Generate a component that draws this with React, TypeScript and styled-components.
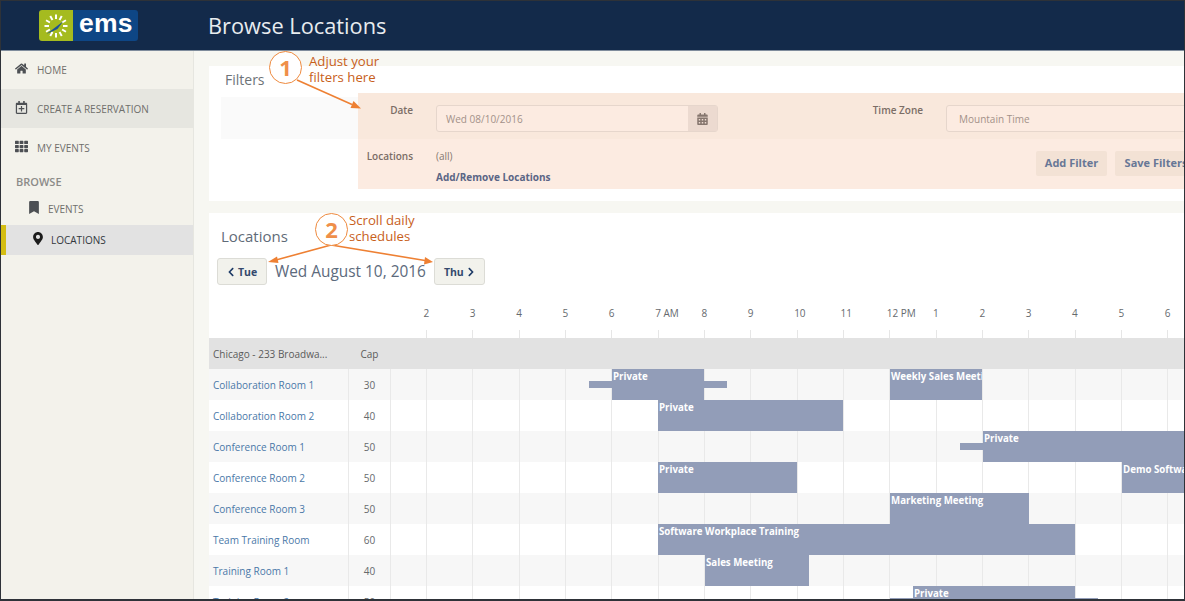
import React from "react";
import styled, { createGlobalStyle } from "styled-components";
import {
  FaHome,
  FaRegCalendarPlus,
  FaTh,
  FaBookmark,
  FaMapMarkerAlt,
  FaCalendarAlt,
  FaChevronLeft,
  FaChevronRight,
} from "react-icons/fa";

// Types
interface Booking {
  start: number;
  end: number;
  title?: string;
  stubStart?: number;
  stubEnd?: number;
}

interface Room {
  name: string;
  cap: number;
  bookings: Booking[];
}

// All booking positions are page x coordinates, the chart starts at x = 391
const CHART_X = 391;
const HOUR_WIDTH = 46.33;

const hours = ["2", "3", "4", "5", "6", "7 AM", "8", "9", "10", "11", "12 PM", "1", "2", "3", "4", "5", "6"];

const rooms: Room[] = [
  {
    name: "Collaboration Room 1",
    cap: 30,
    bookings: [
      { start: 612, end: 704, title: "Private", stubStart: 589, stubEnd: 727 },
      { start: 890, end: 982, title: "Weekly Sales Meeting" },
    ],
  },
  { name: "Collaboration Room 2", cap: 40, bookings: [{ start: 658, end: 843, title: "Private" }] },
  {
    name: "Conference Room 1",
    cap: 50,
    bookings: [{ start: 983, end: 1190, title: "Private", stubStart: 960, stubEnd: 1190 }],
  },
  {
    name: "Conference Room 2",
    cap: 50,
    bookings: [
      { start: 658, end: 797, title: "Private" },
      { start: 1122, end: 1190, title: "Demo Software" },
    ],
  },
  { name: "Conference Room 3", cap: 50, bookings: [{ start: 890, end: 1029, title: "Marketing Meeting" }] },
  { name: "Team Training Room", cap: 60, bookings: [{ start: 658, end: 1075, title: "Software Workplace Training" }] },
  { name: "Training Room 1", cap: 40, bookings: [{ start: 705, end: 809, title: "Sales Meeting" }] },
  {
    name: "Training Room 2",
    cap: 50,
    bookings: [{ start: 913, end: 1075, title: "Private", stubStart: 890, stubEnd: 1098 }],
  },
];

const GlobalStyle = createGlobalStyle`
  html, body {
    margin: 0;
    padding: 0;
    background: #fff;
  }
  * {
    box-sizing: border-box;
  }
`;

// Page frame
const Frame = styled.div`
  position: relative;
  width: 1185px;
  height: 601px;
  border: 1px solid #2e3238;
  border-bottom-width: 2px;
  overflow: hidden;
  font-family: "Open Sans", "Liberation Sans", sans-serif;
  background: #f7f7f2;
  display: flex;
  flex-direction: column;
`;

const Header = styled.header`
  height: 50px;
  flex: none;
  display: flex;
  align-items: center;
  background: #132a4a;
  border-bottom: 1px solid #7f8c9c;
`;

const Logo = styled.div`
  width: 207px;
  flex: none;
  padding-left: 38px;
  display: flex;
  height: 31px;
`;

const LogoMark = styled.div`
  width: 34px;
  height: 31px;
  background: #a5bb1f;
  border-radius: 3px 0 0 3px;
  display: flex;
  align-items: center;
  justify-content: center;
`;

const LogoWord = styled.div`
  width: 65px;
  height: 31px;
  background: #0e4685;
  border-radius: 0 3px 3px 0;
  color: #fff;
  font-family: "Liberation Sans", Arial, sans-serif;
  font-weight: 700;
  font-size: 26.5px;
  line-height: 27px;
  padding-left: 6px;
  letter-spacing: 0.2px;
`;

const PageTitle = styled.h1`
  margin: 0;
  font-size: 21.8px;
  font-weight: 400;
  color: #e8ecef;
`;

const Body = styled.div`
  flex: 1;
  display: flex;
  min-height: 0;
`;

// Sidebar
const Sidebar = styled.nav`
  width: 193px;
  flex: none;
  background: #f3f2eb;
  border-right: 1px solid #e6e6e0;
`;

const NavItem = styled.div<{ $active?: boolean }>`
  height: 39px;
  display: flex;
  align-items: center;
  padding-left: 14px;
  gap: 9px;
  font-size: 10px;
  color: #6f6f6c;
  background: ${(props) => (props.$active ? "#e6e6e0" : "transparent")};

  svg {
    width: 13px;
    height: 13px;
    color: #4d5054;
    margin-top: -3px;
  }
`;

const HomeItem = styled(NavItem)`
  height: 38px;
`;

const NavHeading = styled.div`
  padding: 7px 0 0 15px;
  height: 28px;
  font-size: 11px;
  font-weight: 600;
  color: #8b8b88;
`;

const SubItem = styled.div<{ $selected?: boolean }>`
  height: 30px;
  display: flex;
  align-items: center;
  gap: ${(props) => (props.$selected ? "8px" : "9px")};
  padding-left: ${(props) => (props.$selected ? "27px" : "28px")};
  padding-bottom: ${(props) => (props.$selected ? "0" : "2px")};
  font-size: 10px;
  color: ${(props) => (props.$selected ? "#33383d" : "#6f6f6c")};
  background: ${(props) => (props.$selected ? "#e2e2e2" : "transparent")};
  border-left: ${(props) => (props.$selected ? "5px solid #d4bd12" : "none")};

  svg {
    width: 10px;
    height: 13px;
    margin-top: -3px;
    color: ${(props) => (props.$selected ? "#1c1c1c" : "#4d5054")};
  }
`;

// Main column
const Main = styled.main`
  flex: 1;
  min-width: 0;
  padding: 15px 0 0 15px;
  display: flex;
  flex-direction: column;
  gap: 12px;
  overflow: hidden;
`;

const Card = styled.section`
  background: #fff;
`;

const CardTitle = styled.h2`
  margin: 0;
  font-size: 14px;
  font-weight: 400;
  color: #6d7378;
  height: 27px;
  line-height: 28px;
  padding-left: 16px;
`;

const FilterRow = styled.div`
  display: flex;
  padding-bottom: 12px;
`;

const GhostBlock = styled.div`
  flex: none;
  width: 137px;
  height: 42px;
  margin: 4px 0 0 12px;
  background: #fafafa;
`;

const Panel = styled.div`
  flex: 1;
  min-width: 0;
  overflow: hidden;
  background: #fcebe1;
`;

const PanelTop = styled.div`
  height: 46px;
  padding-top: 12px;
  display: flex;
  background: #f9e8dc;
`;

const PanelBottom = styled.div`
  height: 50px;
  display: flex;
`;

const Label = styled.div<{ $offset?: number }>`
  flex: none;
  width: 55px;
  margin-left: ${(props) => props.$offset ?? 0}px;
  margin-right: 23px;
  text-align: right;
  white-space: nowrap;
  font-size: 10px;
  font-weight: 600;
  line-height: 12px;
  color: #7b6d66;
`;

const TopLabel = styled(Label)`
  margin-top: -1px;
`;

const LocationsLabel = styled(Label)`
  margin-top: 11px;
`;

const InputBox = styled.div<{ $width: number }>`
  flex: none;
  width: ${(props) => props.$width}px;
  height: 27px;
  display: flex;
  background: #fcebe1;
  border: 1px solid #e6d6cc;
  border-radius: 3px;
  font-size: 10px;
  color: #a39189;
`;

const InputText = styled.div<{ $pad: number }>`
  flex: 1;
  line-height: 26px;
  padding-left: ${(props) => props.$pad}px;
`;

const InputAddon = styled.div`
  width: 29px;
  background: #ecdad0;
  display: flex;
  align-items: center;
  justify-content: center;
  color: #85766e;

  svg {
    width: 11px;
    height: 12px;
  }
`;

const LocationsCol = styled.div`
  flex: none;
  width: 600px;
  padding-top: 11px;
`;

const AllText = styled.div`
  font-size: 10px;
  line-height: 12px;
  color: #85776f;
`;

const AddRemove = styled.div`
  margin-top: 9px;
  font-size: 10px;
  line-height: 12px;
  font-weight: 700;
  color: #5a6585;
`;

const FilterButtons = styled.div`
  flex: none;
  display: flex;
  gap: 8px;
  padding-top: 12px;
`;

const FilterButton = styled.div<{ $width: number }>`
  flex: none;
  width: ${(props) => props.$width}px;
  height: 25px;
  line-height: 24px;
  text-align: center;
  background: #f3e2d5;
  border-radius: 2px;
  font-size: 11px;
  font-weight: 700;
  color: #677796;
  white-space: nowrap;
`;

// Locations schedule
const ScheduleCard = styled(Card)`
  flex: 1;
  min-height: 0;
  overflow: hidden;
`;

const ScheduleTitle = styled(CardTitle)`
  height: 46px;
  line-height: 47px;
  padding-left: 12px;
  font-size: 15px;
  color: #5f6b78;
`;

const DateNav = styled.div`
  display: flex;
  align-items: center;
  padding-left: 8px;
  gap: 8px;
  margin-top: -1px;
`;

const DayButton = styled.div`
  width: 50px;
  height: 27px;
  display: flex;
  align-items: center;
  justify-content: center;
  gap: 3px;
  background: #f2f2ec;
  border: 1px solid #dcdcd6;
  border-radius: 3px;
  font-size: 10.5px;
  font-weight: 700;
  color: #34496c;

  svg {
    width: 8px;
    height: 10px;
    color: #1d3a66;
  }
`;

const NextDayButton = styled(DayButton)`
  width: 51px;
`;

const CurrentDate = styled.div`
  font-size: 15.4px;
  color: #5c6a7c;
`;

const Axis = styled.div`
  height: 53px;
  display: flex;
  padding-left: ${426 - 209}px;
`;

const AxisCell = styled.div`
  flex: none;
  width: ${HOUR_WIDTH}px;
  position: relative;
  font-size: 10px;
  line-height: 12px;
  padding-top: 22px;
  color: #666a6e;
  white-space: nowrap;

  span {
    margin-left: -2.5px;
  }

  &::after {
    content: "";
    position: absolute;
    left: 0;
    bottom: 0;
    width: 1px;
    height: 8px;
    background: #e6e6e6;
  }
`;

const Table = styled.div`
  position: relative;
`;

const GridLines = styled.div`
  position: absolute;
  top: 0;
  bottom: 0;
  left: ${426 - 209}px;
  display: flex;
  pointer-events: none;
`;

const GridLine = styled.div`
  flex: none;
  width: ${HOUR_WIDTH}px;
  border-left: 1px solid #e9e9e9;
`;

const HeaderRow = styled.div`
  position: relative;
  z-index: 1;
  height: 31px;
  display: flex;
  align-items: center;
  background: #e2e2e2;
  font-size: 10px;
  color: #5b5b5b;
`;

const HeaderName = styled.div`
  width: 140px;
  padding-left: 4px;
`;

const HeaderCap = styled.div`
  width: 41px;
  text-align: center;
`;

const Row = styled.div<{ $striped: boolean }>`
  height: 31px;
  display: flex;
  background: ${(props) => (props.$striped ? "#f7f7f7" : "#fff")};
  font-size: 10px;
`;

const RoomName = styled.div`
  width: 140px;
  flex: none;
  line-height: 32px;
  padding-left: 4px;
  color: #4a78a8;
  border-right: 1px solid #e9e9e9;
`;

const RoomCap = styled.div`
  width: 42px;
  flex: none;
  line-height: 32px;
  text-align: center;
  color: #66696c;
  border-right: 1px solid #e9e9e9;
`;

const Track = styled.div`
  position: relative;
  flex: 1;
`;

const Bar = styled.div`
  position: absolute;
  z-index: 2;
  top: 0;
  bottom: 0;
  overflow: hidden;
  background: #929db8;
  color: #fff;
  font-size: 9.7px;
  font-weight: 700;
  line-height: 14px;
  padding: 1px 0 0 1px;
  white-space: nowrap;
`;

const Stub = styled.div`
  position: absolute;
  z-index: 2;
  top: 12px;
  height: 7px;
  background: #929db8;
`;

// Callouts drawn over the page
const Arrows = styled.svg`
  position: absolute;
  left: -1px;
  top: -1px;
  z-index: 5;
  pointer-events: none;
`;

const Badge = styled.div<{ $x: number; $y: number }>`
  position: absolute;
  z-index: 6;
  left: ${(props) => props.$x - 1}px;
  top: ${(props) => props.$y - 1}px;
  width: 33px;
  height: 33px;
  border: 1px solid #ee8a3e;
  border-radius: 50%;
  background: #fff;
  text-align: center;
  font-size: 22px;
  font-weight: 700;
  line-height: 30px;
  color: #ef8f4a;
`;

const Note = styled.div<{ $x: number; $y: number }>`
  position: absolute;
  z-index: 6;
  left: ${(props) => props.$x - 1}px;
  top: ${(props) => props.$y - 1}px;
  font-size: 13.2px;
  line-height: 16px;
  color: #c8601a;
`;

const SunMark: React.FC = () => (
  <svg width="30" height="30" viewBox="0 0 30 30">
    {Array.from({ length: 12 }).map((_, i) => (
      <line
        key={i}
        x1="15"
        y1="3.5"
        x2="15"
        y2="8"
        stroke="#fff"
        strokeWidth="2"
        transform={`rotate(${i * 30} 15 15)`}
      />
    ))}
    <path d="M5.5 23 L22 10.5 L16.5 18 Z" fill="#1c5296" />
  </svg>
);

const App: React.FC = () => {
  return (
    <>
      <GlobalStyle />
      <Frame>
        <Header>
          <Logo>
            <LogoMark>
              <SunMark />
            </LogoMark>
            <LogoWord>ems</LogoWord>
          </Logo>
          <PageTitle>Browse Locations</PageTitle>
        </Header>

        <Body>
          <Sidebar>
            <HomeItem>
              <FaHome />
              HOME
            </HomeItem>
            <NavItem $active>
              <FaRegCalendarPlus />
              CREATE A RESERVATION
            </NavItem>
            <NavItem>
              <FaTh />
              MY EVENTS
            </NavItem>
            <NavHeading>BROWSE</NavHeading>
            <SubItem>
              <FaBookmark />
              EVENTS
            </SubItem>
            <SubItem $selected>
              <FaMapMarkerAlt />
              LOCATIONS
            </SubItem>
          </Sidebar>

          <Main>
            <Card>
              <CardTitle>Filters</CardTitle>
              <FilterRow>
                <GhostBlock />
                <Panel>
                  <PanelTop>
                    <TopLabel>Date</TopLabel>
                    <InputBox $width={282}>
                      <InputText $pad={9}>Wed 08/10/2016</InputText>
                      <InputAddon>
                        <FaCalendarAlt />
                      </InputAddon>
                    </InputBox>
                    <TopLabel $offset={150}>Time Zone</TopLabel>
                    <InputBox $width={300}>
                      <InputText $pad={12}>Mountain Time</InputText>
                    </InputBox>
                  </PanelTop>
                  <PanelBottom>
                    <LocationsLabel>Locations</LocationsLabel>
                    <LocationsCol>
                      <AllText>(all)</AllText>
                      <AddRemove>Add/Remove Locations</AddRemove>
                    </LocationsCol>
                    <FilterButtons>
                      <FilterButton $width={71}>Add Filter</FilterButton>
                      <FilterButton $width={82}>Save Filters</FilterButton>
                    </FilterButtons>
                  </PanelBottom>
                </Panel>
              </FilterRow>
            </Card>

            <ScheduleCard>
              <ScheduleTitle>Locations</ScheduleTitle>
              <DateNav>
                <DayButton>
                  <FaChevronLeft />
                  Tue
                </DayButton>
                <CurrentDate>Wed August 10, 2016</CurrentDate>
                <NextDayButton>
                  Thu
                  <FaChevronRight />
                </NextDayButton>
              </DateNav>

              <Axis>
                {hours.map((hour, i) => (
                  <AxisCell key={i}>
                    <span>{hour}</span>
                  </AxisCell>
                ))}
              </Axis>

              <Table>
                <HeaderRow>
                  <HeaderName>Chicago - 233 Broadwa...</HeaderName>
                  <HeaderCap>Cap</HeaderCap>
                </HeaderRow>
                {rooms.map((room, i) => (
                  <Row key={room.name} $striped={i % 2 === 0}>
                    <RoomName>{room.name}</RoomName>
                    <RoomCap>{room.cap}</RoomCap>
                    <Track>
                      {room.bookings.map((b) => (
                        <React.Fragment key={b.start}>
                          {b.stubStart !== undefined && b.stubEnd !== undefined && (
                            <Stub
                              style={{
                                left: b.stubStart - CHART_X,
                                width: b.stubEnd - b.stubStart,
                              }}
                            />
                          )}
                          <Bar style={{ left: b.start - CHART_X, width: b.end - b.start }}>{b.title}</Bar>
                        </React.Fragment>
                      ))}
                    </Track>
                  </Row>
                ))}
                <GridLines>
                  {hours.map((_, i) => (
                    <GridLine key={i} />
                  ))}
                </GridLines>
              </Table>
            </ScheduleCard>
          </Main>
        </Body>

        <Arrows width="1185" height="601" viewBox="0 0 1185 601">
          <g fill="none" stroke="#ee8033" strokeWidth="1.6">
            <line x1="297" y1="80" x2="352" y2="104.5" />
            <line x1="331" y1="245" x2="276" y2="260" />
            <line x1="331" y1="245" x2="425" y2="260.5" />
          </g>
          <g fill="#ee8033">
            <polygon points="361,108.5 350.5,108 353.5,101" />
            <polygon points="268,262 277,256.5 278.5,263" />
            <polygon points="433,262 424,264.5 425,257" />
          </g>
        </Arrows>
        <Badge $x={269} $y={51}>
          1
        </Badge>
        <Note $x={309} $y={53}>
          Adjust your
          <br />
          filters here
        </Note>
        <Badge $x={315} $y={213}>
          2
        </Badge>
        <Note $x={349} $y={212}>
          Scroll daily
          <br />
          schedules
        </Note>
      </Frame>
    </>
  );
};

export default App;
